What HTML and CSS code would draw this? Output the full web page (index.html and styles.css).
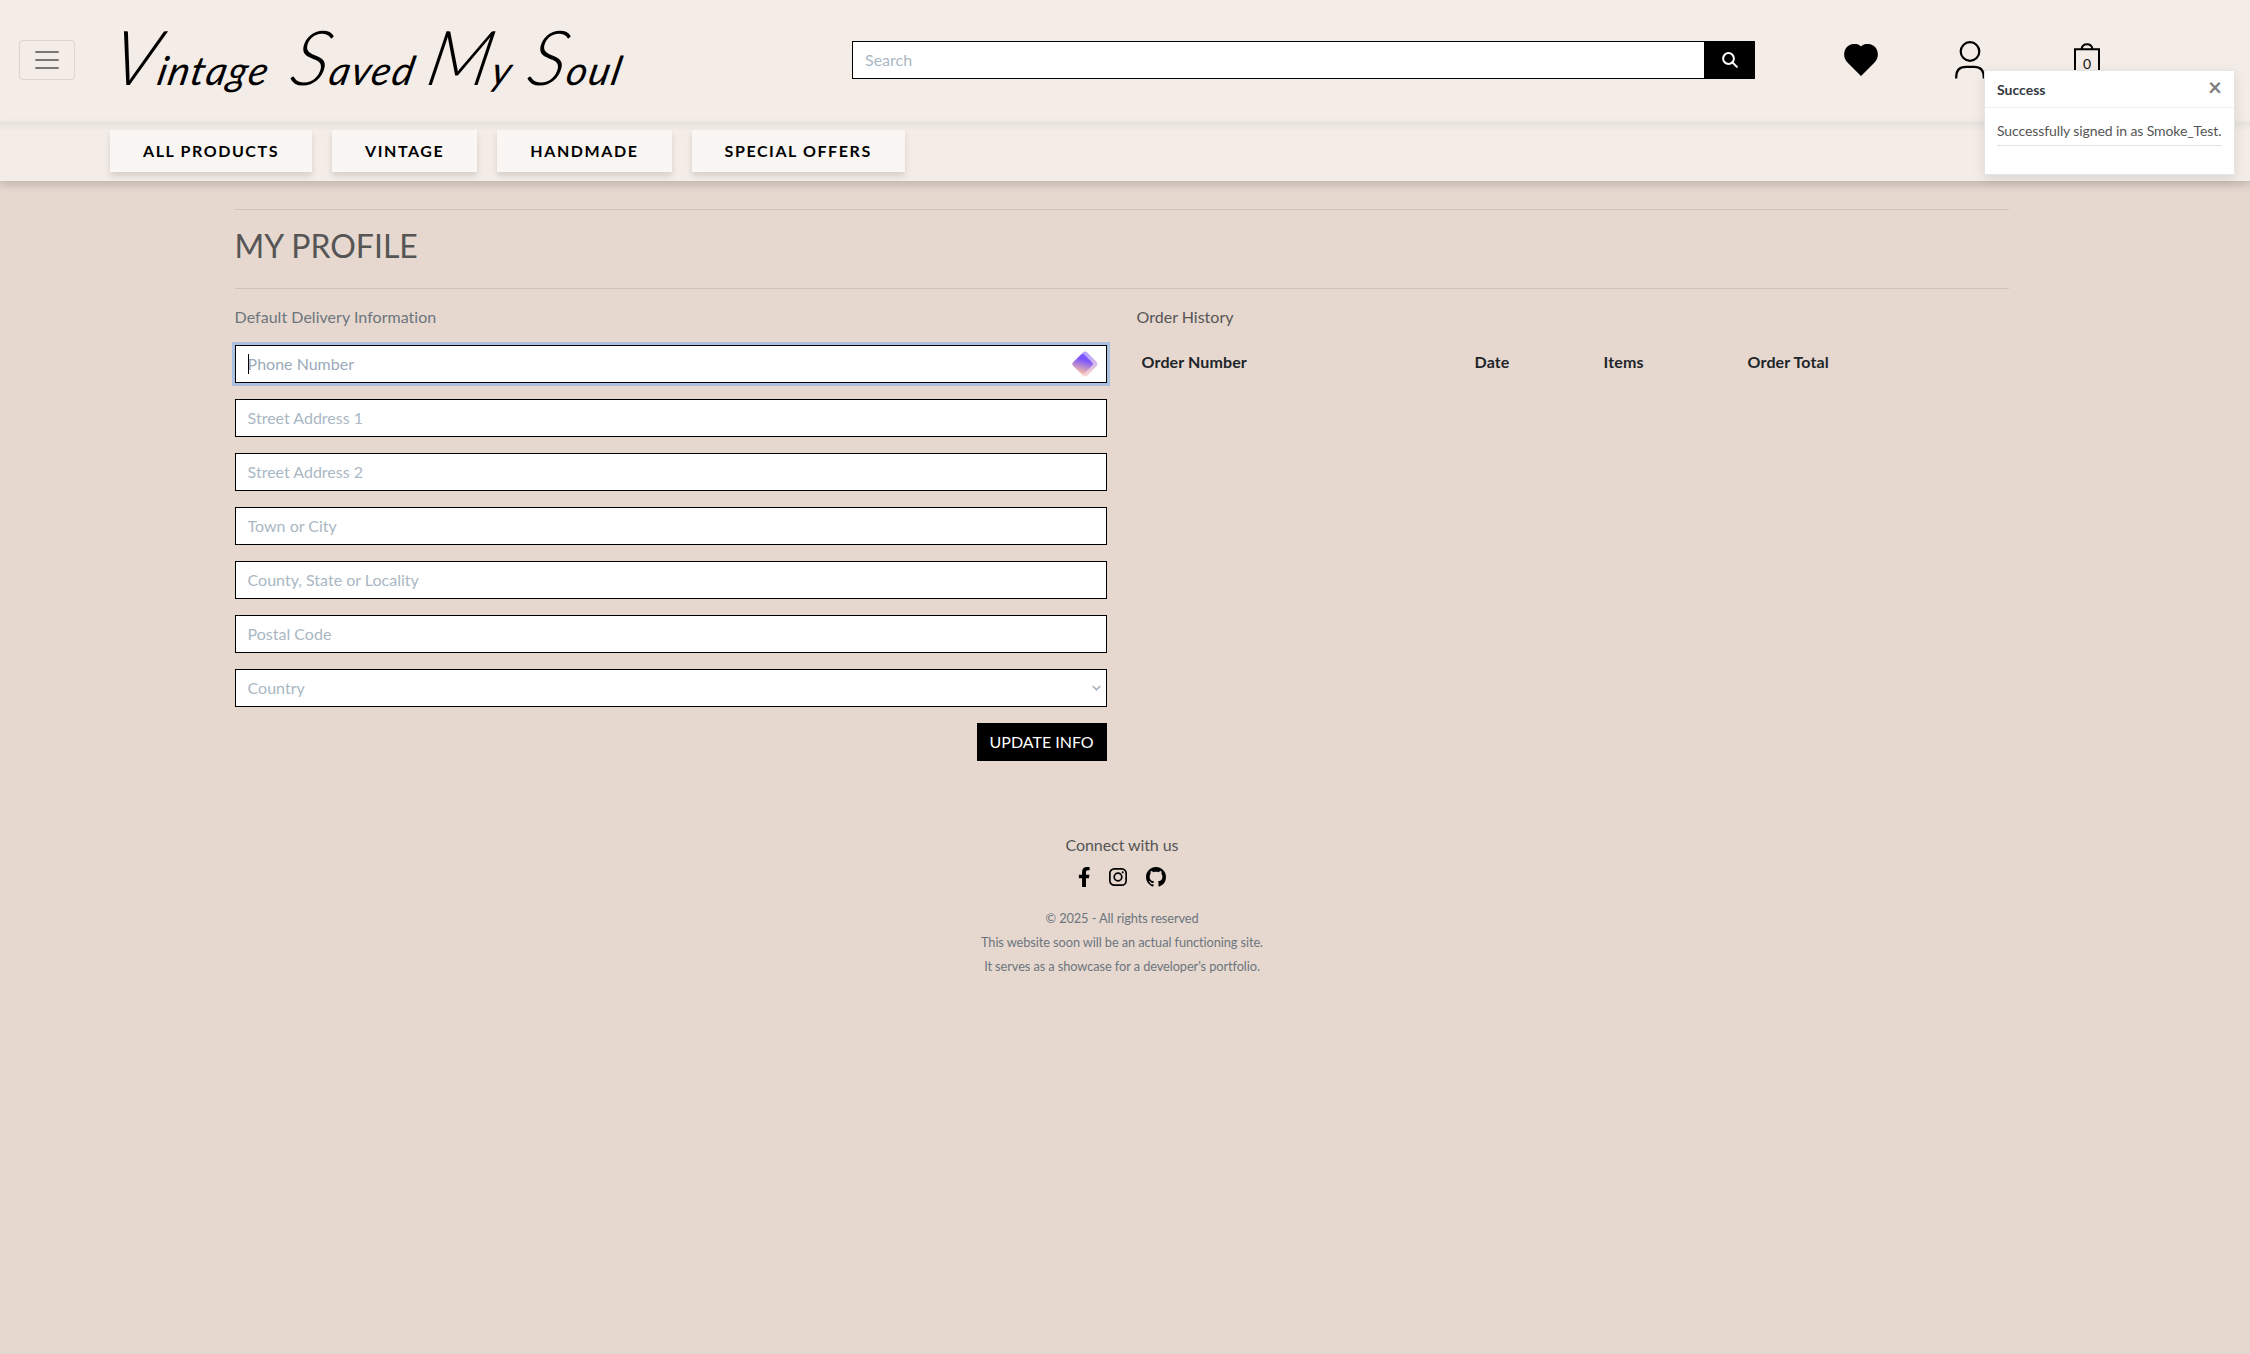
FILE: index.html
```html
<!DOCTYPE html>
<html lang="en">
<head>
<meta charset="utf-8">
<title>Vintage Saved My Soul</title>
<link rel="stylesheet" href="styles.css">
</head>
<body>
<header class="top">
  <button class="toggler" aria-label="Menu"><svg width="30" height="30" viewBox="0 0 30 30"><path stroke="rgba(0,0,0,.5)" stroke-linecap="round" stroke-width="2" d="M4 7h22M4 15h22M4 23h22"/></svg></button>
  <a class="brand"><span class="word"><b>V</b>intage</span> <span class="word"><b>S</b>aved</span> <span class="word"><b>M</b>y</span> <span class="word"><b>S</b>oul</span></a>
  <form class="search"><input class="field search-field" placeholder="Search"><button type="button" class="search-btn" aria-label="Search"><svg width="16" height="16" viewBox="0 0 16 16" fill="none" stroke="#fff" stroke-width="2"><circle cx="6.5" cy="6.5" r="5.4"/><path stroke-linecap="round" d="M10.5 10.5l4.4 4.4"/></svg></button></form>
  <div class="actions">
    <svg class="heart" width="34" height="32" viewBox="0 0 34 32"><path d="M17 2.6C21-1.500 28-.8 31.500 3.500C35 8 34.500 14.500 30.500 18.500L17 32L3.500 18.500C-.5 14.500-1 8 2.500 3.500C6-.8 13-1.500 17 2.600Z"/></svg>
    <svg class="user" width="30" height="38" viewBox="0 0 30 38" fill="none" stroke="#000" stroke-width="2.200"><ellipse cx="15" cy="10.500" rx="9.300" ry="9.300"/><path d="M1.200 37.500V36C1.200 29 4.500 25.800 11 25.800h8c6.500 0 9.800 3.200 9.800 10.200v1.500"/></svg>
    <span class="bag"><svg width="26" height="36" viewBox="0 0 26 36" fill="none" stroke="#000" stroke-width="2"><path d="M1 6.200h24V35H1zM7.500 6C8.500-.5 17.500-.5 18.500 6"/></svg><span class="count">0</span></span>
  </div>
</header>
<nav class="links"><a>ALL PRODUCTS</a><a>VINTAGE</a><a>HANDMADE</a><a>SPECIAL OFFERS</a></nav>
<main class="content">
  <hr>
  <h1>MY PROFILE</h1>
  <hr>
  <div class="columns">
    <section>
      <p class="muted">Default Delivery Information</p>
      <form class="profile">
        <div class="focus"><input class="field" placeholder="Phone Number"><i class="caret"></i>
          <svg class="gem" width="26" height="26" viewBox="0 0 26 26"><defs><linearGradient id="g" x1=".6" y1=".15" x2=".35" y2="1"><stop offset=".15" stop-color="#7a55ff"/><stop offset="1" stop-color="#ffc59a"/></linearGradient><linearGradient id="h" x1="0" y1="0" x2="1" y2="1"><stop offset=".1" stop-color="#7a55ff"/><stop offset="1" stop-color="#ffb9a0"/></linearGradient></defs><rect x="3.300" y="3.300" width="19.400" height="19.400" rx="3.500" transform="rotate(45 13 13)" fill="url(#h)" opacity=".55"/><path d="M1 11.500L9 3.800Q10.800 2.200 12.500 3.800L20.200 11.500Q21.600 13 20.200 14.500L12.500 22.200Q10.800 23.800 9 22.200L1 14.500Q-.3 13 1 11.500Z" fill="url(#g)"/></svg>
        </div>
        <input class="field" placeholder="Street Address 1">
        <input class="field" placeholder="Street Address 2">
        <input class="field" placeholder="Town or City">
        <input class="field" placeholder="County, State or Locality">
        <input class="field" placeholder="Postal Code">
        <div class="field select"><span>Country</span><svg width="9" height="6" viewBox="0 0 9 6" fill="none" stroke="#aab7c4" stroke-width="1.700"><path d="M.7 1L4.500 4.700L8.300 1"/></svg></div>
        <button type="button" class="update">UPDATE INFO</button>
      </form>
    </section>
    <section>
      <p>Order History</p>
      <div class="orders"><b>Order Number</b><b>Date</b><b>Items</b><b>Order Total</b></div>
    </section>
  </div>
</main>
<footer class="foot">
  <p class="connect">Connect with us</p>
  <div class="social">
    <svg width="12.500" height="20" viewBox="0 0 320 512"><path d="M279.140 288l14.220-92.660h-88.910v-60.130c0-25.350 12.420-50.060 52.240-50.060h40.420V6.260S260.430 0 225.360 0c-73.220 0-121.080 44.380-121.080 124.720v70.620H22.890V288h81.390v224h100.170V288z"/></svg>
    <svg width="18" height="18" viewBox="0 0 18 18" fill="none" stroke="#000" stroke-width="1.700"><rect x=".85" y=".85" width="16.300" height="16.300" rx="4.500"/><circle cx="9" cy="9" r="3.800"/><circle cx="13.700" cy="4.300" r="1.100" fill="#000" stroke="none"/></svg>
    <svg width="20" height="20" viewBox="0 0 16 16"><path fill-rule="evenodd" d="M8 0C3.580 0 0 3.580 0 8c0 3.540 2.290 6.530 5.470 7.590.4.070.55-.17.55-.38 0-.19-.01-.82-.01-1.490-2.010.37-2.530-.49-2.690-.94-.09-.23-.48-.94-.82-1.130-.28-.15-.68-.52-.01-.53.63-.01 1.080.58 1.230.82.72 1.210 1.870.87 2.330.66.07-.52.28-.87.51-1.070-1.780-.2-3.640-.89-3.640-3.950 0-.87.31-1.590.82-2.150-.08-.2-.36-1.020.08-2.120 0 0 .67-.21 2.200.82.64-.18 1.320-.27 2-.27s1.360.09 2 .27c1.530-1.040 2.200-.82 2.200-.82.44 1.100.16 1.920.08 2.120.51.56.82 1.270.82 2.150 0 3.070-1.870 3.750-3.650 3.950.29.25.54.73.54 1.480 0 1.070-.01 1.930-.01 2.200 0 .21.15.46.55.38A8.010 8.010 0 0 0 16 8c0-4.420-3.580-8-8-8z"/></svg>
  </div>
  <small>© 2025 - All rights reserved</small>
  <small>This website soon will be an actual functioning site.</small>
  <small>It serves as a showcase for a developer's portfolio.</small>
</footer>
<aside class="toast">
  <div class="toast-head"><strong>Success</strong><span class="close">×</span></div>
  <div class="toast-body"><p>Successfully signed in as Smoke_Test.</p></div>
</aside>
</body>
</html>
```
FILE: styles.css
```css
* { box-sizing: border-box; }
body { margin: 0; min-height: 1354px; background: #e6d8cf; color: #555; font: 16px/24px Lato, sans-serif; }
p { margin: 0; }
button, input { font: inherit; }
.top { height: 122px; display: flex; align-items: flex-start; padding-left: 19px; background: #f4ece6; border-bottom: 1px solid #f3efec; }
.toggler { width: 56px; height: 40px; margin-top: 40px; padding: 4px 12px; border: 1px solid rgba(0,0,0,.1); border-radius: 4px; background: none; }
.toggler svg { display: block; }
.brand { display: grid; grid-template-columns: 180px 136px 101px 1fr; width: 538px; height: 100px; margin-left: 37px; padding-top: 31px; color: #000; font: italic 400 40px/50px Lato, cursive; letter-spacing: 1.5px; white-space: nowrap; }
.word { display: inline-block; transform: skewX(-12deg); }
.brand b { font-size: 76px; font-weight: 300; }
.search { display: flex; width: 903px; height: 38px; margin: 41px 0 0 202px; }
.field { display: block; width: 100%; height: 38px; padding: 5px 12px 7px; border: 1px solid #000; border-radius: 0; background: #fff; outline: 0; color: #aab7c4; }
.field::placeholder { color: #aab7c4; opacity: 1; }
.search-field { width: 853px; }
.search-btn { flex: 1; padding: 0; border: 0; background: #000; display: grid; place-items: center; }
.actions { display: flex; align-items: flex-start; }
.heart { margin: 44px 0 0 89px; }
.user { margin: 41px 0 0 77px; }
.bag { position: relative; width: 26px; height: 36px; margin: 43px 0 0 89px; }
.count { position: absolute; left: 0; right: 0; top: 11px; text-align: center; font-size: 14px; line-height: 20px; color: #111; }
.links { height: 59px; padding: 8px 0 0 110px; display: flex; gap: 20px; background: linear-gradient(#e7e1dc, #f4ece6 9px); box-shadow: 0 4px 8px rgba(0,0,0,.16); }
.links a { height: 42px; padding: 9px 33px; background: #faf6f3; color: #000; font-weight: 700; letter-spacing: 1.58px; box-shadow: 0 4px 6px rgba(0,0,0,.12); }
.content { width: 1774px; margin-left: 234.6px; padding-top: 28px; }
hr { height: 1px; margin: 0; border: 0; background: #cfc3ba; }
h1 { height: 78px; margin: 0; padding-top: 16px; font-size: 32px; line-height: 40px; font-weight: 400; }
.columns { display: grid; grid-template-columns: 1fr 1fr; gap: 30px; padding-top: 16px; }
.muted { color: #6c757d; letter-spacing: .03px; }
.profile { display: flex; flex-direction: column; gap: 16px; padding-top: 16px; }
.focus { position: relative; box-shadow: 0 0 0 3px #a9c0e0; }
.focus .field::placeholder { color: #9caab9; }
.caret { position: absolute; left: 13px; top: 9px; width: 1px; height: 20px; background: #000; }
.gem { position: absolute; right: 9px; top: 6px; }
.select { display: flex; align-items: center; justify-content: space-between; padding: 6px 5px 6px 12px; }
.update { align-self: flex-end; width: 130px; height: 38px; padding: 0; border: 0; background: #000; color: #fff; }
.orders { display: grid; grid-template-columns: 333px 129px 144px 1fr; padding: 21px 5px; color: #212529; letter-spacing: .12px; }
.foot { width: 2244px; padding-top: 72px; display: flex; flex-direction: column; align-items: center; }
.connect { letter-spacing: -.08px; }
.social { height: 20px; margin: 10px 0 19px; display: flex; align-items: center; gap: 19px; }
.foot small { font-size: 12.8px; line-height: 24px; letter-spacing: -.09px; color: #6c757d; }
.toast { position: absolute; left: 1984px; top: 70px; width: 251px; height: 105px; background: #fff; border: 1px solid rgba(0,0,0,.1); box-shadow: 0 4px 12px rgba(0,0,0,.1); font-size: 14px; line-height: 21px; }
.toast-head { height: 37px; padding: 8px 12px; border-bottom: 1px solid #eee; display: flex; justify-content: space-between; color: #343a40; }
.close { margin-top: -3px; font-size: 24px; font-weight: 700; color: #808080; line-height: 21px; }
.toast-body { padding: 12px; }
.toast-body p { height: 26px; border-bottom: 1px solid #dee2e6; letter-spacing: -.1px; white-space: nowrap; }
```
